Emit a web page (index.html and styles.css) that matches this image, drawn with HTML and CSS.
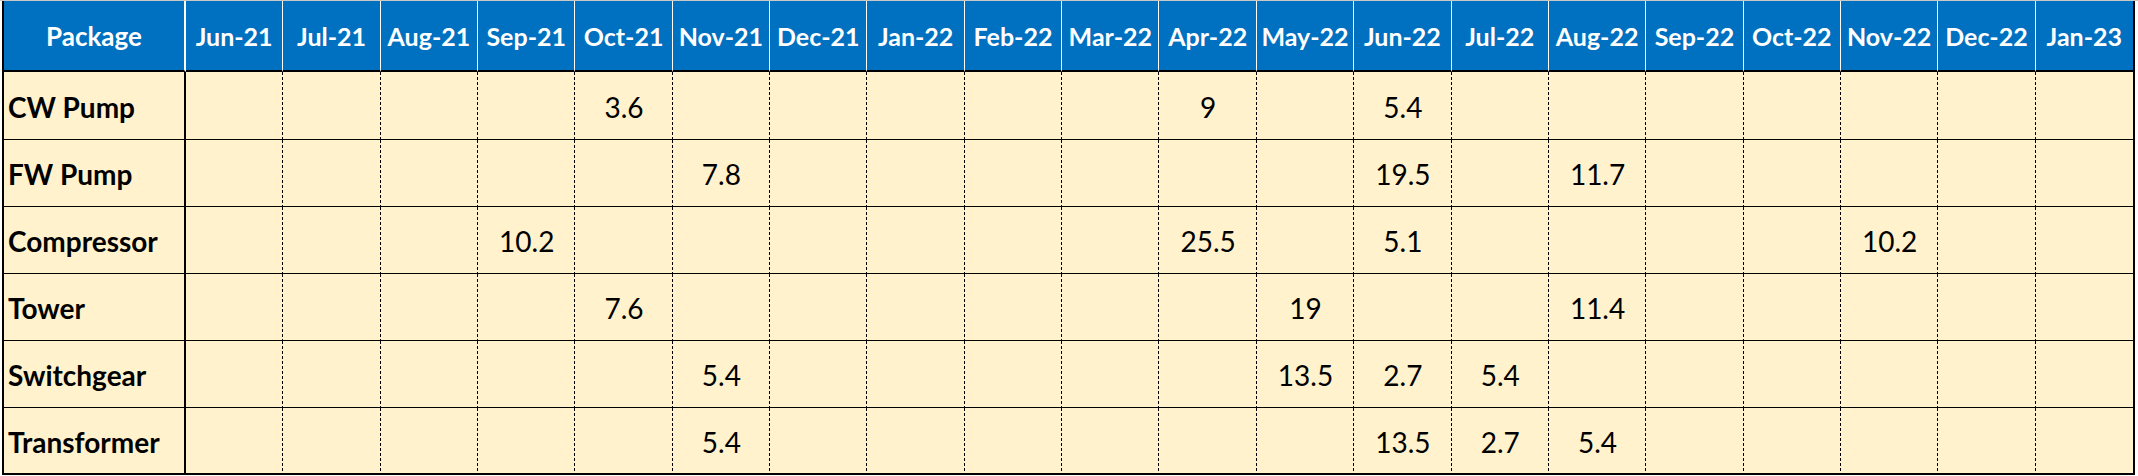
FILE: index.html
```html
<!DOCTYPE html>
<html lang="en">
<head>
<meta charset="utf-8">
<title>Package schedule</title>
<link rel="stylesheet" href="styles.css">
</head>
<body>
<div class="page">
  <div class="sheet">
    <div class="hd pkg">Package</div>
    <div class="hd">Jun-21</div><div class="hd">Jul-21</div><div class="hd">Aug-21</div><div class="hd">Sep-21</div><div class="hd">Oct-21</div><div class="hd">Nov-21</div><div class="hd">Dec-21</div><div class="hd">Jan-22</div><div class="hd">Feb-22</div><div class="hd">Mar-22</div><div class="hd">Apr-22</div><div class="hd">May-22</div><div class="hd">Jun-22</div><div class="hd">Jul-22</div><div class="hd">Aug-22</div><div class="hd">Sep-22</div><div class="hd">Oct-22</div><div class="hd">Nov-22</div><div class="hd">Dec-22</div><div class="hd last">Jan-23</div>

    <div class="lb">CW Pump</div>
    <div class="c"></div><div class="c"></div><div class="c"></div><div class="c"></div><div class="c">3.6</div><div class="c"></div><div class="c"></div><div class="c"></div><div class="c"></div><div class="c"></div><div class="c">9</div><div class="c"></div><div class="c">5.4</div><div class="c"></div><div class="c"></div><div class="c"></div><div class="c"></div><div class="c"></div><div class="c"></div><div class="c last"></div>

    <div class="lb">FW Pump</div>
    <div class="c"></div><div class="c"></div><div class="c"></div><div class="c"></div><div class="c"></div><div class="c">7.8</div><div class="c"></div><div class="c"></div><div class="c"></div><div class="c"></div><div class="c"></div><div class="c"></div><div class="c">19.5</div><div class="c"></div><div class="c">11.7</div><div class="c"></div><div class="c"></div><div class="c"></div><div class="c"></div><div class="c last"></div>

    <div class="lb">Compressor</div>
    <div class="c"></div><div class="c"></div><div class="c"></div><div class="c">10.2</div><div class="c"></div><div class="c"></div><div class="c"></div><div class="c"></div><div class="c"></div><div class="c"></div><div class="c">25.5</div><div class="c"></div><div class="c">5.1</div><div class="c"></div><div class="c"></div><div class="c"></div><div class="c"></div><div class="c">10.2</div><div class="c"></div><div class="c last"></div>

    <div class="lb">Tower</div>
    <div class="c"></div><div class="c"></div><div class="c"></div><div class="c"></div><div class="c">7.6</div><div class="c"></div><div class="c"></div><div class="c"></div><div class="c"></div><div class="c"></div><div class="c"></div><div class="c">19</div><div class="c"></div><div class="c"></div><div class="c">11.4</div><div class="c"></div><div class="c"></div><div class="c"></div><div class="c"></div><div class="c last"></div>

    <div class="lb">Switchgear</div>
    <div class="c"></div><div class="c"></div><div class="c"></div><div class="c"></div><div class="c"></div><div class="c">5.4</div><div class="c"></div><div class="c"></div><div class="c"></div><div class="c"></div><div class="c"></div><div class="c">13.5</div><div class="c">2.7</div><div class="c">5.4</div><div class="c"></div><div class="c"></div><div class="c"></div><div class="c"></div><div class="c"></div><div class="c last"></div>

    <div class="lb end">Transformer</div>
    <div class="c end"></div><div class="c end"></div><div class="c end"></div><div class="c end"></div><div class="c end"></div><div class="c end">5.4</div><div class="c end"></div><div class="c end"></div><div class="c end"></div><div class="c end"></div><div class="c end"></div><div class="c end"></div><div class="c end">13.5</div><div class="c end">2.7</div><div class="c end">5.4</div><div class="c end"></div><div class="c end"></div><div class="c end"></div><div class="c end"></div><div class="c end last"></div>
  </div>
</div>
</body>
</html>
```

FILE: styles.css
```css
* { box-sizing: border-box; }
html, body { margin: 0; padding: 0; background: #ffffff; }
.page {
  border-top: 1px solid #c8c8c8;
  width: 2138px;
  height: 476px;
  padding-left: 2px;
}
.sheet {
  width: 2133px;
  display: grid;
  grid-template-columns: 182px repeat(20, 1fr);
  grid-template-rows: 71px 68px 67px 67px 67px 67px 65px;
  border-left: 2px solid #000;
  border-right: 2px solid #000;
  border-bottom: 2px solid #000;
  font-family: Lato, "Liberation Sans", sans-serif;
  background: #fff2cc;
}
.hd {
  background: #0070c0;
  color: #ffffff;
  font-weight: 700;
  font-size: 25px;
  display: flex;
  align-items: center;
  justify-content: center;
  border-right: 1px solid #ffffff;
  border-bottom: 2px solid #000;
}
.hd.pkg { border-right: 2px solid #ffffff; font-size: 26px; }
.hd.last { border-right: none; }
.lb {
  font-weight: 700;
  font-size: 28px;
  color: #000;
  display: flex;
  align-items: center;
  padding-left: 4px;
  padding-top: 2px;
  border-right: 2px solid #000;
  border-bottom: 1px solid #000;
}
.c {
  font-size: 28px;
  color: #000;
  display: flex;
  align-items: center;
  justify-content: center;
  padding-top: 2px;
  background-image: repeating-linear-gradient(to bottom, #000 0, #000 3px, transparent 3px, transparent 5px);
  background-size: 1px 100%;
  background-position: right top;
  background-repeat: no-repeat;
  border-bottom: 1px solid #000;
}
.c.last { background-image: none; }
.end { border-bottom: none; }
```
